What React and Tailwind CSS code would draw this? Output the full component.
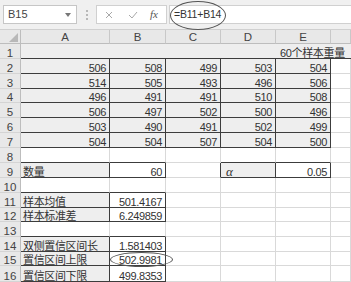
import React from "react";

const COLS = "grid-cols-[21px_89px_56px_55px_55px_55px_1fr]";
const HEIGHTS = [15, 15, 15, 14, 15, 15, 15, 15, 15, 15, 15, 14, 15, 15, 14, 16];

const data = {
  2: ["506", "508", "499", "503", "504"],
  3: ["514", "505", "493", "496", "506"],
  4: ["496", "491", "491", "510", "508"],
  5: ["506", "497", "502", "500", "496"],
  6: ["503", "490", "491", "502", "499"],
  7: ["504", "504", "507", "504", "500"],
};

const lower = {
  9: { A: "数量", B: "60", D: "α", E: "0.05" },
  11: { A: "样本均值", B: "501.4167" },
  12: { A: "样本标准差", B: "6.249859" },
  14: { A: "双侧置信区间长", B: "1.581403" },
  15: { A: "置信区间上限", B: "502.9981" },
  16: { A: "置信区间下限", B: "499.8353" },
};

function inBox(r, c) {
  if (r >= 2 && r <= 7 && c >= 1 && c <= 5) return true;
  if (r === 9 && (c === 1 || c === 2 || c === 4 || c === 5)) return true;
  if ((r === 11 || r === 12) && (c === 1 || c === 2)) return true;
  if (r >= 14 && r <= 16 && (c === 1 || c === 2)) return true;
  return false;
}

function isGray(r, c) {
  if (r >= 1 && r <= 7 && c >= 1 && c <= 5) return true;
  if (r === 9 && (c === 1 || c === 4)) return true;
  if ([11, 12, 14, 15, 16].includes(r) && c === 1) return true;
  return false;
}

const LETTERS = ["", "A", "B", "C", "D", "E", "F"];

function Cell({ r, c }) {
  const darkR = inBox(r, c) || inBox(r, c + 1);
  const darkB = inBox(r, c) || inBox(r + 1, c);
  const bg = isGray(r, c) ? "bg-[#eeeeee]" : "bg-white";
  const br = darkR ? "border-r-[#3c3c3c]" : "border-r-[#d9d9d9]";
  const bb = darkB ? "border-b-[#3c3c3c]" : "border-b-[#d9d9d9]";
  let text = null;
  let align = "justify-end pr-[3px]";
  if (data[r] && c <= 5) text = data[r][c - 1];
  if (lower[r]) {
    const v = lower[r][LETTERS[c]];
    if (v !== undefined) {
      text = v;
      if (c === 1 || (c === 4 && r === 9)) align = "justify-start pl-[2px]";
    }
  }
  const isAlpha = text === "α";
  return (
    <div className={`flex items-end overflow-visible whitespace-nowrap border-r border-b ${br} ${bb} ${bg} ${align}`}>
      {text !== null && (
        isAlpha ? (
          <span className="text-[13px] leading-[11px] italic text-[#333] font-['Liberation_Serif',serif] pl-[3px]">α</span>
        ) : (
          <span className="text-[11px] leading-[10px] tracking-[-0.35px] text-[#333]">{text}</span>
        )
      )}
    </div>
  );
}

function RowHeader({ r }) {
  return (
    <div className="flex items-end justify-center border-r border-b border-r-[#bdbdbd] border-b-[#d4d4d4] bg-[#e8e8e8]">
      <span className="text-[11.5px] leading-[10px] text-[#444]">{r}</span>
    </div>
  );
}

export default function App() {
  const rows = [];
  for (let r = 1; r <= 16; r++) {
    const h = HEIGHTS[r - 1];
    if (r === 1) {
      rows.push(
        <div key={r} className={`grid ${COLS}`} style={{ height: h }}>
          <RowHeader r={r} />
          <div className="col-span-6 flex items-end border-b border-b-[#3c3c3c] bg-[#eeeeee] pl-[259px]">
            <span className="whitespace-nowrap text-[11px] leading-[10px] tracking-[-0.35px] text-[#333]">60个样本重量</span>
          </div>
        </div>
      );
      continue;
    }
    const cells = [];
    for (let c = 1; c <= 6; c++) cells.push(<Cell key={c} r={r} c={c} />);
    rows.push(
      <div key={r} className={`grid ${COLS}`} style={{ height: h }}>
        <RowHeader r={r} />
        {cells}
      </div>
    );
  }

  return (
    <div className="relative h-[282px] w-[351px] overflow-hidden bg-white font-['Liberation_Sans','Noto_Sans_CJK_SC',sans-serif]">
      {/* formula bar */}
      <div className="flex h-[30px] items-start border-b border-[#d0d0d0] bg-[#f0f0f0] pt-[5px]">
        <div className="ml-[3px] flex h-[19px] w-[74px] items-center justify-between border border-[#c6c6c6] bg-white pl-[4px] pr-[5px]">
          <span className="text-[11px] text-[#444]">B15</span>
          <svg width="6" height="4" viewBox="0 0 6 4"><path d="M0 0h6L3 4z" fill="#777" /></svg>
        </div>
        <div className="ml-[9px] flex h-[19px] flex-col items-center justify-center gap-[2px]">
          <span className="h-[2px] w-[2px] bg-[#b8b8b8]" />
          <span className="h-[2px] w-[2px] bg-[#b8b8b8]" />
          <span className="h-[2px] w-[2px] bg-[#b8b8b8]" />
        </div>
        <div className="ml-[8px] flex h-[19px] w-[71px] items-center border border-[#d0d0d0] bg-white">
          <svg className="ml-[8px]" width="8" height="8" viewBox="0 0 8 8"><path d="M1 1l6 6M7 1L1 7" stroke="#a8a8a8" strokeWidth="1" /></svg>
          <svg className="ml-[15px]" width="10" height="8" viewBox="0 0 10 8"><path d="M1 4l3 3 5-6" stroke="#a8a8a8" strokeWidth="1" fill="none" /></svg>
          <span className="ml-[12px] text-[11px] italic text-[#555] font-['Liberation_Serif',serif]">fx</span>
        </div>
        <div className="ml-[2px] flex h-[19px] flex-1 items-center border border-r-0 border-[#d0d0d0] bg-white pl-[4px]">
          <span className="text-[10.5px] tracking-[-0.2px] text-[#333]">=B11+B14</span>
        </div>
      </div>

      {/* column headers */}
      <div className={`grid ${COLS} h-[14px]`}>
        <div className="relative border-r border-b border-[#bdbdbd] bg-[#e8e8e8]">
          <svg className="absolute right-[2px] bottom-[1px]" width="9" height="9" viewBox="0 0 9 9"><path d="M9 0V9H0z" fill="#b8b8b8" /></svg>
        </div>
        {["A", "B", "C", "D", "E", ""].map((l, i) => (
          <div key={i} className="flex items-end justify-center border-r border-b border-r-[#c8c8c8] border-b-[#bdbdbd] bg-[#e8e8e8]">
            <span className="text-[11.5px] leading-[11px] text-[#444]">{l}</span>
          </div>
        ))}
      </div>

      {rows}

      {/* annotation ellipses */}
      <div className="pointer-events-none absolute left-[170px] top-[1px] h-[29px] w-[56px] rounded-[50%] border border-[#555]" />
      <div className="pointer-events-none absolute left-[110px] top-[252px] h-[15px] w-[63px] rounded-[50%] border border-[#555]" />
    </div>
  );
}
